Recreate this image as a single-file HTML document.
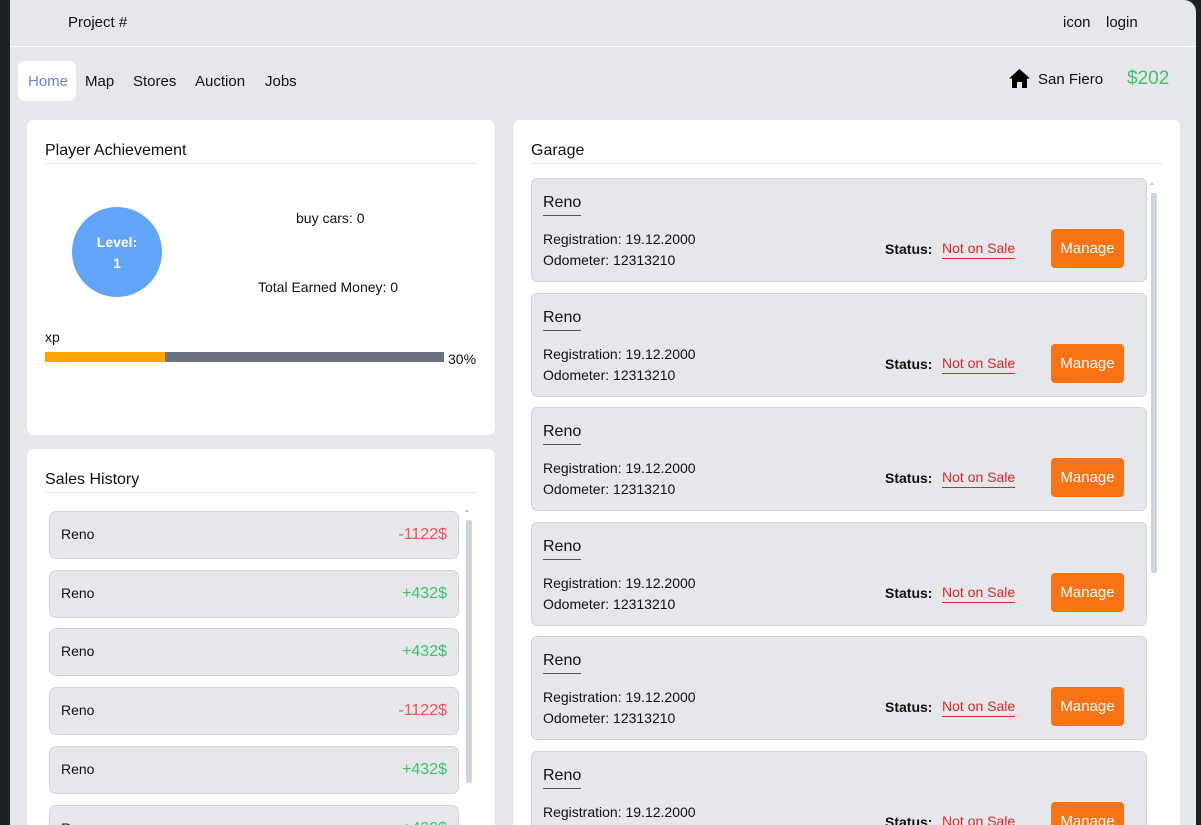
<!DOCTYPE html>
<html><head><meta charset="utf-8"><style>
*{box-sizing:border-box;margin:0;padding:0}
html,body{width:1201px;height:825px;overflow:hidden}
body{background:#1f2128;font-family:"Liberation Sans",sans-serif;color:#111;position:relative}
.win{position:absolute;left:10px;top:0;width:1186px;height:825px;background:#e5e7eb;border-top-right-radius:12px;overflow:hidden}
.a{position:absolute;white-space:nowrap}
.hdr{position:absolute;left:0;top:46px;width:1186px;height:1px;background:#fff}
.card{position:absolute;background:#fff;border-radius:7px}
.t{position:absolute;font-size:16px;color:#111}
.ln{position:absolute;height:1px;background:#e5e7eb}
.si{position:absolute;width:410px;height:48px;background:#e5e7eb;border:1px solid #d1d5db;border-radius:7px;font-size:14px}
.si span{position:absolute;top:14px}
.si .n{left:11px}
.si .v{right:11px;font-size:16px;top:14px}
.red{color:#f05252}.grn{color:#3cc36a}
.gc{position:absolute;width:616px;height:104px;background:#e5e7eb;border:1px solid #d1d5db;border-radius:6px;font-size:14px}
.gc .nm{position:absolute;left:11px;top:15px;font-size:16px;padding-bottom:3px;border-bottom:1px solid #555}
.gc .r{position:absolute;left:11px;top:50px;line-height:21px}
.gc .s{position:absolute;left:353px;top:62px;font-weight:bold}
.gc .ns{position:absolute;left:410px;top:61px;color:#e02424;border-bottom:1px solid #e02424;padding-bottom:2px}
.gc .b{position:absolute;left:519px;top:50px;width:73px;height:39px;background:#f97316;color:#fff;border-radius:4px;font-size:15px;text-align:center;line-height:39px}
</style></head><body>
<div class="win">
<div class="a" style="left:58px;top:14px;font-size:15px">Project #</div>
<div class="a" style="left:1053px;top:14px;font-size:15px">icon</div>
<div class="a" style="left:1096px;top:14px;font-size:15px">login</div>
<div class="hdr"></div>
<div class="a" style="left:8px;top:61px;width:58px;height:40px;background:#fff;border-radius:7px"></div>
<div class="a" style="left:18px;top:73px;font-size:15px;color:#6d7df0">Home</div>
<div class="a" style="left:75px;top:73px;font-size:15px">Map</div>
<div class="a" style="left:123px;top:73px;font-size:15px">Stores</div>
<div class="a" style="left:185px;top:73px;font-size:15px">Auction</div>
<div class="a" style="left:255px;top:73px;font-size:15px">Jobs</div>
<svg class="a" style="left:998px;top:68px" width="23" height="21" viewBox="0 0 23 21"><path d="M11.5 1 L1 10.5 H4 V20 H9 V14 H14 V20 H19 V10.5 H22 Z" fill="#000"/></svg>
<div class="a" style="left:1028px;top:71px;font-size:15px">San Fiero</div>
<div class="a" style="left:1117px;top:68px;font-size:19px;color:#3cc36a">$202</div>

<div class="card" style="left:17px;top:120px;width:468px;height:315px"></div>
<div class="t" style="left:35px;top:142px">Player Achievement</div>
<div class="ln" style="left:35px;top:163px;width:432px"></div>
<div class="a" style="left:62px;top:207px;width:90px;height:90px;border-radius:50%;background:#60a5fa;color:#fff;font-size:14px;font-weight:bold;text-align:center;padding-top:25px;line-height:21px">Level:<br>1</div>
<div class="a" style="left:286px;top:210px;font-size:14px">buy cars: 0</div>
<div class="a" style="left:248px;top:279px;font-size:14px">Total Earned Money: 0</div>
<div class="a" style="left:35px;top:329px;font-size:14px">xp</div>
<div class="a" style="left:35px;top:352px;width:120px;height:10px;background:#ffa500"></div>
<div class="a" style="left:155px;top:352px;width:279px;height:10px;background:#6b7280"></div>
<div class="a" style="left:438px;top:351px;font-size:14px">30%</div>

<div class="card" style="left:17px;top:449px;width:468px;height:400px"></div>
<div class="t" style="left:35px;top:471px">Sales History</div>
<div class="ln" style="left:35px;top:492px;width:432px"></div>
<div class="si" style="left:39px;top:511px"><span class="n">Reno</span><span class="v red">-1122$</span></div>
<div class="si" style="left:39px;top:570px"><span class="n">Reno</span><span class="v grn">+432$</span></div>
<div class="si" style="left:39px;top:628px"><span class="n">Reno</span><span class="v grn">+432$</span></div>
<div class="si" style="left:39px;top:687px"><span class="n">Reno</span><span class="v red">-1122$</span></div>
<div class="si" style="left:39px;top:746px"><span class="n">Reno</span><span class="v grn">+432$</span></div>
<div class="si" style="left:39px;top:805px"><span class="n">Reno</span><span class="v grn">+432$</span></div>
<div class="a" style="left:456px;top:520px;width:6px;height:263px;background:#cbd5e1;border-radius:2px"></div>
<div class="a" style="left:455px;top:508px;font-size:12px;color:#999">&#710;</div>

<div class="card" style="left:503px;top:120px;width:667px;height:720px"></div>
<div class="t" style="left:521px;top:142px">Garage</div>
<div class="ln" style="left:521px;top:163px;width:631px"></div>
<div class="a" style="left:1141px;top:193px;width:6px;height:380px;background:#cbd5e1;border-radius:2px"></div>
<div class="a" style="left:1140px;top:181px;font-size:12px;color:#999">&#710;</div>

<div class="gc" style="left:521px;top:178px"><span class="nm">Reno</span><div class="r">Registration: 19.12.2000<br>Odometer: 12313210</div><span class="s">Status:</span><span class="ns">Not on Sale</span><div class="b">Manage</div></div>
<div class="gc" style="left:521px;top:293px"><span class="nm">Reno</span><div class="r">Registration: 19.12.2000<br>Odometer: 12313210</div><span class="s">Status:</span><span class="ns">Not on Sale</span><div class="b">Manage</div></div>
<div class="gc" style="left:521px;top:407px"><span class="nm">Reno</span><div class="r">Registration: 19.12.2000<br>Odometer: 12313210</div><span class="s">Status:</span><span class="ns">Not on Sale</span><div class="b">Manage</div></div>
<div class="gc" style="left:521px;top:522px"><span class="nm">Reno</span><div class="r">Registration: 19.12.2000<br>Odometer: 12313210</div><span class="s">Status:</span><span class="ns">Not on Sale</span><div class="b">Manage</div></div>
<div class="gc" style="left:521px;top:636px"><span class="nm">Reno</span><div class="r">Registration: 19.12.2000<br>Odometer: 12313210</div><span class="s">Status:</span><span class="ns">Not on Sale</span><div class="b">Manage</div></div>
<div class="gc" style="left:521px;top:751px"><span class="nm">Reno</span><div class="r">Registration: 19.12.2000<br>Odometer: 12313210</div><span class="s">Status:</span><span class="ns">Not on Sale</span><div class="b">Manage</div></div>
</div>
</body></html>
